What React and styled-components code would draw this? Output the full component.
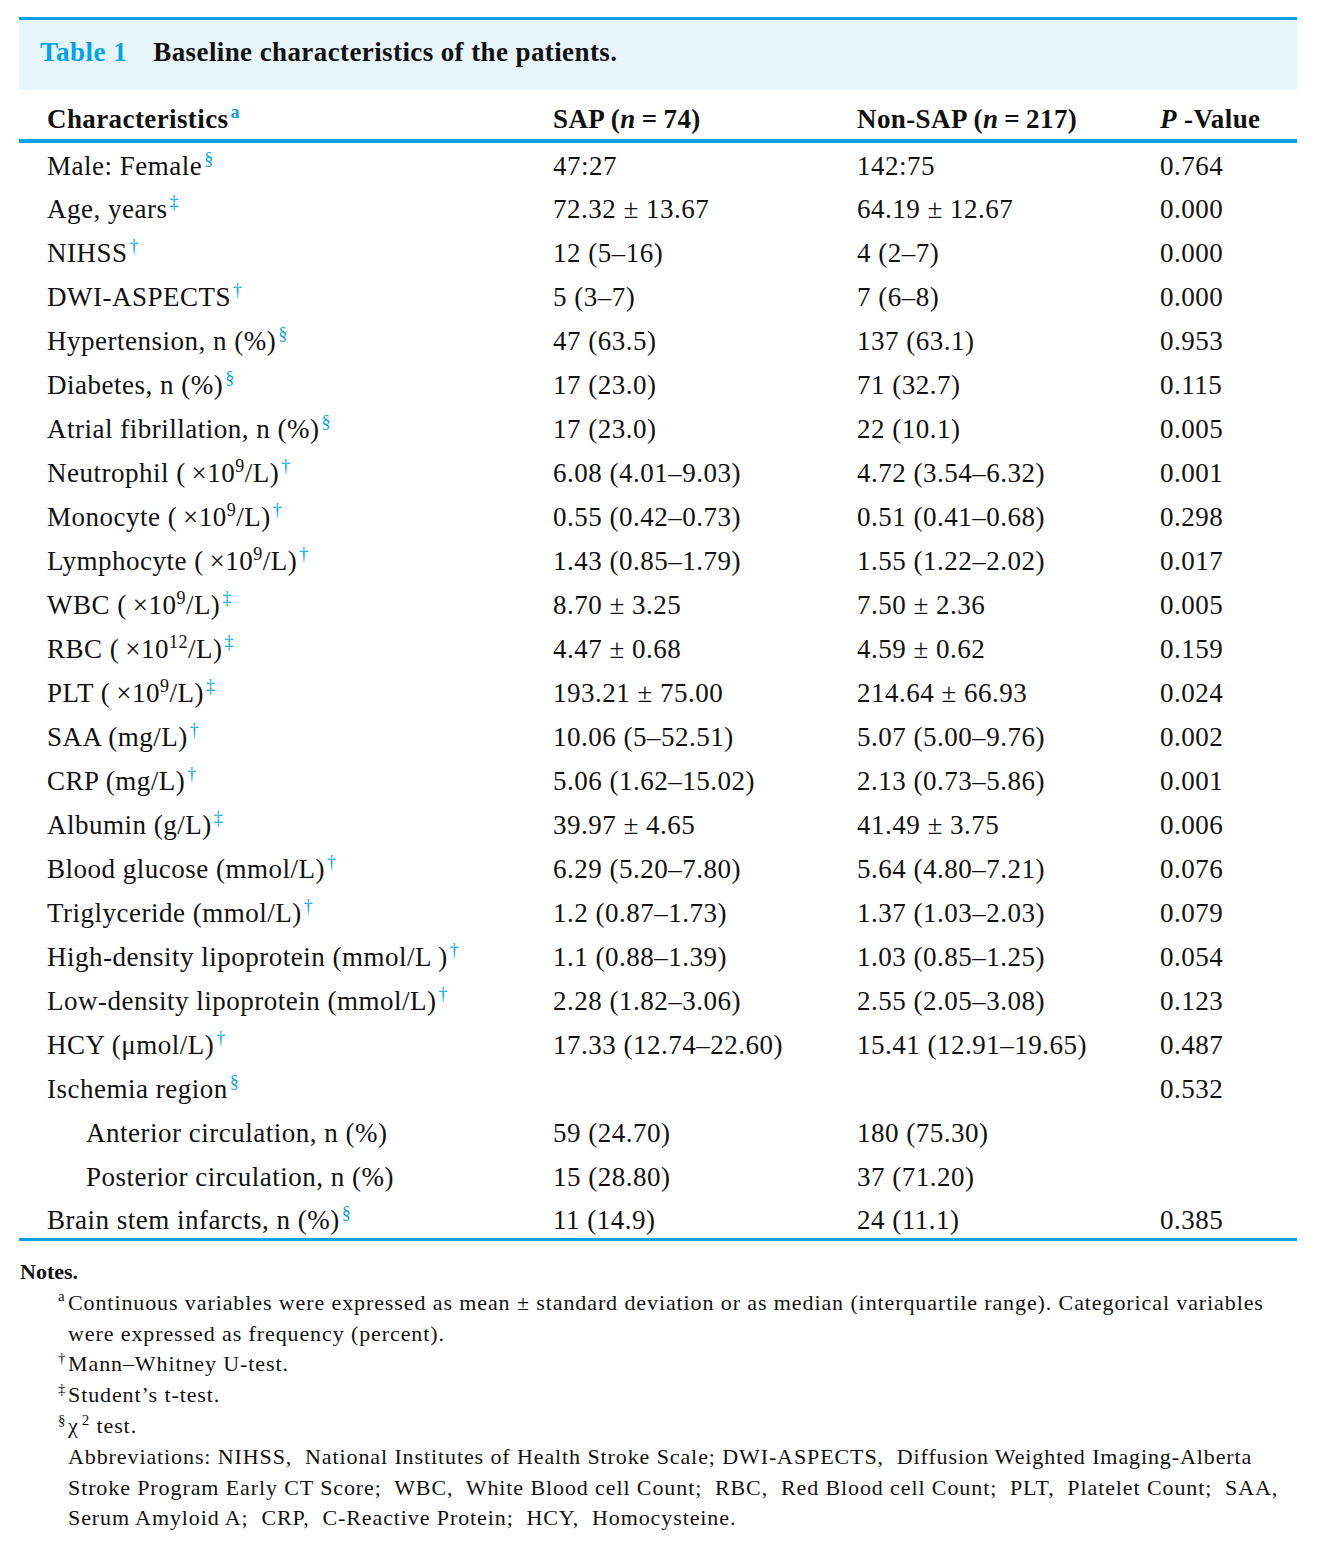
import React from "react";
import styled, { createGlobalStyle } from "styled-components";

const BLUE = "#00a2e8";

const rows = [
  { label: "Male: Female", mark: "§", sap: "47:27", non: "142:75", p: "0.764" },
  { label: "Age, years", mark: "‡", sap: "72.32 ± 13.67", non: "64.19 ± 12.67", p: "0.000" },
  { label: "NIHSS", mark: "†", sap: "12 (5–16)", non: "4 (2–7)", p: "0.000" },
  { label: "DWI-ASPECTS", mark: "†", sap: "5 (3–7)", non: "7 (6–8)", p: "0.000" },
  { label: "Hypertension, n (%)", mark: "§", sap: "47 (63.5)", non: "137 (63.1)", p: "0.953" },
  { label: "Diabetes, n (%)", mark: "§", sap: "17 (23.0)", non: "71 (32.7)", p: "0.115" },
  { label: "Atrial fibrillation, n (%)", mark: "§", sap: "17 (23.0)", non: "22 (10.1)", p: "0.005" },
  { label: "Neutrophil (\u2009×10", exp: "9", unit: "/L)", mark: "†", sap: "6.08 (4.01–9.03)", non: "4.72 (3.54–6.32)", p: "0.001" },
  { label: "Monocyte (\u2009×10", exp: "9", unit: "/L)", mark: "†", sap: "0.55 (0.42–0.73)", non: "0.51 (0.41–0.68)", p: "0.298" },
  { label: "Lymphocyte (\u2009×10", exp: "9", unit: "/L)", mark: "†", sap: "1.43 (0.85–1.79)", non: "1.55 (1.22–2.02)", p: "0.017" },
  { label: "WBC (\u2009×10", exp: "9", unit: "/L)", mark: "‡", sap: "8.70 ± 3.25", non: "7.50 ± 2.36", p: "0.005" },
  { label: "RBC (\u2009×10", exp: "12", unit: "/L)", mark: "‡", sap: "4.47 ± 0.68", non: "4.59 ± 0.62", p: "0.159" },
  { label: "PLT (\u2009×10", exp: "9", unit: "/L)", mark: "‡", sap: "193.21 ± 75.00", non: "214.64 ± 66.93", p: "0.024" },
  { label: "SAA (mg/L)", mark: "†", sap: "10.06 (5–52.51)", non: "5.07 (5.00–9.76)", p: "0.002" },
  { label: "CRP (mg/L)", mark: "†", sap: "5.06 (1.62–15.02)", non: "2.13 (0.73–5.86)", p: "0.001" },
  { label: "Albumin (g/L)", mark: "‡", sap: "39.97 ± 4.65", non: "41.49 ± 3.75", p: "0.006" },
  { label: "Blood glucose (mmol/L)", mark: "†", sap: "6.29 (5.20–7.80)", non: "5.64 (4.80–7.21)", p: "0.076" },
  { label: "Triglyceride (mmol/L)", mark: "†", sap: "1.2 (0.87–1.73)", non: "1.37 (1.03–2.03)", p: "0.079" },
  { label: "High-density lipoprotein (mmol/L )", mark: "†", sap: "1.1 (0.88–1.39)", non: "1.03 (0.85–1.25)", p: "0.054" },
  { label: "Low-density lipoprotein (mmol/L)", mark: "†", sap: "2.28 (1.82–3.06)", non: "2.55 (2.05–3.08)", p: "0.123" },
  { label: "HCY (μmol/L)", mark: "†", sap: "17.33 (12.74–22.60)", non: "15.41 (12.91–19.65)", p: "0.487" },
  { label: "Ischemia region", mark: "§", sap: "", non: "", p: "0.532" },
  { label: "Anterior circulation, n (%)", sub: true, sap: "59 (24.70)", non: "180 (75.30)", p: "" },
  { label: "Posterior circulation, n (%)", sub: true, sap: "15 (28.80)", non: "37 (71.20)", p: "" },
  { label: "Brain stem infarcts, n (%)", mark: "§", sap: "11 (14.9)", non: "24 (11.1)", p: "0.385" },
];

export default function App() {
  return (
    <>
      <GlobalStyle />
      <Page>
        <TableFrame>
          <Caption>
            <CaptionLabel>Table 1</CaptionLabel>
            <CaptionTitle>Baseline characteristics of the patients.</CaptionTitle>
          </Caption>
          <DataTable>
            <colgroup>
              <col style={{ width: 534 }} />
              <col style={{ width: 304 }} />
              <col style={{ width: 303 }} />
              <col />
            </colgroup>
            <thead>
              <tr>
                <HeadCell $first>
                  Characteristics<Mark>a</Mark>
                </HeadCell>
                <HeadCell>
                  SAP (<i>n</i>
                  <Eq>=</Eq>74)
                </HeadCell>
                <HeadCell>
                  Non-SAP (<i>n</i>
                  <Eq>=</Eq>217)
                </HeadCell>
                <HeadCell>
                  <i>P</i> -Value
                </HeadCell>
              </tr>
            </thead>
            <tbody>
              {rows.map((r, i) => (
                <BodyRow key={i} $last={i === rows.length - 1}>
                  <LabelCell $sub={r.sub}>
                    {r.label}
                    {r.exp && <Exp>{r.exp}</Exp>}
                    {r.unit}
                    {r.mark && <Mark>{r.mark}</Mark>}
                  </LabelCell>
                  <Cell>{r.sap}</Cell>
                  <Cell>{r.non}</Cell>
                  <Cell>{r.p}</Cell>
                </BodyRow>
              ))}
            </tbody>
          </DataTable>
        </TableFrame>

        <Notes>
          <NotesTitle>Notes.</NotesTitle>
          <Note>
            <NoteMark>a</NoteMark>Continuous variables were expressed as mean ± standard deviation or as
            median (interquartile range). Categorical variables were expressed as frequency (percent).
          </Note>
          <Note>
            <NoteMark>†</NoteMark>Mann–Whitney U-test.
          </Note>
          <Note>
            <NoteMark>‡</NoteMark>Student’s t-test.
          </Note>
          <Note>
            <NoteMark>§</NoteMark>χ<Square>2</Square> test.
          </Note>
          <Note>
            Abbreviations: NIHSS,&nbsp; National Institutes of Health Stroke Scale; DWI-ASPECTS,&nbsp; Diffusion
            Weighted Imaging-Alberta Stroke Program Early CT Score;&nbsp; WBC,&nbsp; White Blood cell Count;&nbsp;
            RBC,&nbsp; Red Blood cell Count;&nbsp; PLT,&nbsp; Platelet Count;&nbsp; SAA, Serum Amyloid A;&nbsp;
            CRP,&nbsp; C-Reactive Protein;&nbsp; HCY,&nbsp; Homocysteine.
          </Note>
        </Notes>
      </Page>
    </>
  );
}

const GlobalStyle = createGlobalStyle`
  body {
    margin: 0;
    background: #ffffff;
    color: #111111;
    font-family: "Liberation Serif", "Times New Roman", serif;
  }
`;

const Page = styled.div`
  width: 1278px;
  padding: 17px 0 20px 19px;
`;

const TableFrame = styled.div`
  border-top: 3px solid ${BLUE};
  border-bottom: 3px solid ${BLUE};
`;

const Caption = styled.div`
  display: flex;
  align-items: center;
  gap: 26px;
  height: 64px;
  padding: 0 0 6px 21px;
  background: #e8f5fb;
  font-size: 27px;
  font-weight: bold;
  letter-spacing: 0.4px;
`;

const CaptionLabel = styled.span`
  color: ${BLUE};
  font-weight: 600;
  letter-spacing: 0.5px;
`;

const CaptionTitle = styled.span`
  color: #111111;
`;

const DataTable = styled.table`
  width: 100%;
  border-collapse: collapse;
  table-layout: fixed;
`;

const HeadCell = styled.th`
  padding: 14px 0 4px ${(p) => (p.$first ? "28px" : "0")};
  text-align: left;
  font-size: 27px;
  line-height: 31px;
  font-weight: bold;
  letter-spacing: 0.4px;
  vertical-align: top;
  border-bottom: 4px solid ${BLUE};
  white-space: nowrap;
`;

const Eq = styled.span`
  margin: 0 6px;
`;

const BodyRow = styled.tr`
  height: ${(p) => (p.$last ? "41px" : "44px")};
`;

const Cell = styled.td`
  padding: 5px 0 0 0;
  font-size: 27px;
  letter-spacing: 0.5px;
  vertical-align: middle;
  white-space: nowrap;
`;

const LabelCell = styled(Cell)`
  padding-left: ${(p) => (p.$sub ? "67px" : "28px")};
`;

const Mark = styled.sup`
  color: ${BLUE};
  font-size: 18px;
  margin-left: 2px;
  line-height: 0;
`;

const Exp = styled.sup`
  font-size: 18px;
  line-height: 0;
`;

const Notes = styled.div`
  width: 1266px;
  padding: 16px 0 0 1px;
  font-size: 22px;
  letter-spacing: 0.9px;
  line-height: 30.8px;
`;

const NotesTitle = styled.div`
  font-weight: bold;
  letter-spacing: 0;
`;

const Note = styled.div`
  padding-left: 48px;
`;

const NoteMark = styled.sup`
  display: inline-block;
  width: 10px;
  margin-left: -10px;
  font-size: 15px;
  line-height: 0;
`;

const Square = styled.sup`
  font-size: 15px;
  line-height: 0;
  margin-left: 3px;
`;
